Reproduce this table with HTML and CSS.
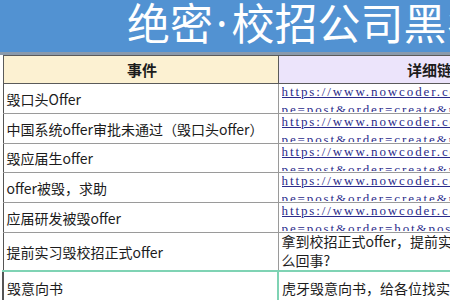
FILE: index.html
```html
<!DOCTYPE html>
<html lang="zh">
<head>
<meta charset="utf-8">
<link rel="stylesheet" href="styles.css">
</head>
<body>
<div class="page">
  <div class="banner"><span class="title">绝密<span class="dot">·</span>校招公司黑名单</span></div>
  <table class="sheet">
    <colgroup><col class="c1"><col class="c2"></colgroup>
    <thead>
      <tr class="head"><th class="h1">事件</th><th class="h2">详细链接</th></tr>
    </thead>
    <tbody>
      <tr class="r30"><td>毁口头Offer</td><td><div class="link"><a>https://www.nowcoder.com/search?query=%E6%AF%81&amp;ty</a><a>pe=post&amp;order=create&amp;pos=&amp;page=1</a></div></td></tr>
      <tr class="r30"><td>中国系统offer审批未通过（毁口头offer）</td><td><div class="link"><a>https://www.nowcoder.com/search?query=%E6%AF%81&amp;ty</a><a>pe=post&amp;order=create&amp;pos=&amp;page=2</a></div></td></tr>
      <tr class="r29"><td>毁应届生offer</td><td><div class="link"><a>https://www.nowcoder.com/search?query=%E6%AF%81&amp;ty</a><a>pe=post&amp;order=create&amp;pos=&amp;page=3</a></div></td></tr>
      <tr class="r30"><td>offer被毁，求助</td><td><div class="link"><a>https://www.nowcoder.com/search?query=%E6%AF%81&amp;ty</a><a>pe=post&amp;order=create&amp;pos=&amp;page=4</a></div></td></tr>
      <tr class="r30"><td>应届研发被毁offer</td><td><div class="link"><a>https://www.nowcoder.com/search?query=%E6%AF%81&amp;ty</a><a>pe=post&amp;order=hot&amp;pos=&amp;page=1</a></div></td></tr>
      <tr class="r36"><td>提前实习毁校招正式offer</td><td><div class="txt">拿到校招正式offer，提前实习被毁offer是怎<br>么回事?</div></td></tr>
      <tr class="sel"><td>毁意向书</td><td>虎牙毁意向书，给各位找实习的同学提个醒</td></tr>
    </tbody>
  </table>
</div>
</body>
</html>
```
FILE: styles.css
```css
html, body {
  margin: 0;
  padding: 0;
  background: #ffffff;
  overflow: hidden;
}
.page {
  width: 450px;
  height: 300px;
  overflow: hidden;
  font-family: "Noto Sans CJK SC", "Noto Sans", sans-serif;
  color: #1c1c1c;
}
.banner {
  height: 52px;
  background: #5292d2;
  border-bottom: 3px solid #8a9aac;
  padding-left: 127px;
  white-space: nowrap;
  overflow: hidden;
}
.title {
  display: block;
  color: #ffffff;
  font-size: 43px;
  line-height: 42px;
}
.dot {
  font-family: "Noto Sans", sans-serif;
  padding: 0 4px 0 3px;
}
.sheet {
  margin-left: 2px;
  border-collapse: collapse;
  table-layout: fixed;
  width: 590px;
}
.c1 { width: 275px; }
.c2 { width: 315px; }
.sheet th, .sheet td {
  border: 1px solid #9a9a9a;
  padding: 0 0 0 3px;
  font-size: 14px;
  text-align: left;
  vertical-align: middle;
  white-space: nowrap;
  overflow: hidden;
}
.head th {
  height: 27px;
  font-weight: bold;
  font-size: 15px;
  text-align: center;
  border-color: #5a5a5a;
}
.h1 { background: #fcf1d2; }
.h2 { background: #ece4fb; }
.sheet td:first-child { border-left-color: #555555; }
.r30 td { height: 29px; }
.r29 td { height: 28px; }
.r36 td { height: 35px; }
.link {
  height: 29px;
  overflow: hidden;
  font-family: "Liberation Serif", serif;
  font-size: 13px;
  line-height: 18px;
  letter-spacing: 1.9px;
  margin-top: -2px;
}
.link a {
  display: block;
  color: #2a2a8a;
  text-decoration: underline;
  white-space: nowrap;
}
.r29 .link { height: 28px; }
.txt {
  font-size: 14px;
  line-height: 19px;
  margin-top: -1px;
}
.sel td {
  height: 32px;
  border-color: #7fd3b4;
  border-width: 2px 1px 1px 2px;
  padding-top: 6px;
  vertical-align: top;
}
```
